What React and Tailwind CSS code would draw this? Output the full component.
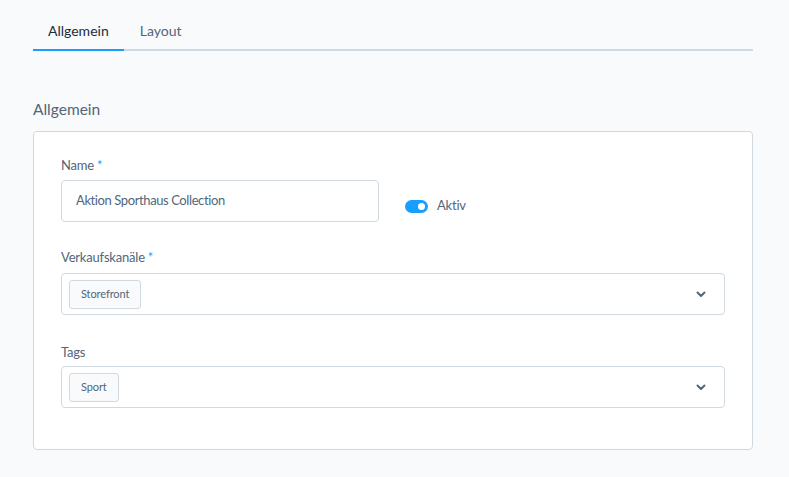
import React from 'react';

const ChevronDown = () => (
  <svg width="12" height="12" viewBox="0 0 12 12" fill="none">
    <path d="M2.5 4.5L6 8L9.5 4.5" stroke="#52667a" strokeWidth="2" strokeLinecap="round" strokeLinejoin="round" />
  </svg>
);

const Chip = ({ label }) => (
  <span className="inline-flex items-center h-[29px] px-[11px] border border-[#d1d9e0] rounded-[3px] bg-[#f9fafb] text-[11px] tracking-[-0.1px] text-[#52667a]">
    {label}
  </span>
);

const MultiSelect = ({ value }) => (
  <div className="flex items-center justify-between h-[42px] pl-[7px] pr-[17px] border border-[#d1d9e0] rounded-[4px] bg-white">
    <Chip label={value} />
    <ChevronDown />
  </div>
);

const Label = ({ children, required, className = 'mb-[6px]' }) => (
  <label className={`block text-[13px] tracking-[-0.2px] text-[#52667a] leading-[18px] ${className}`}>
    {children}
    {required && <span className="text-[#189eff] ml-[3px]">*</span>}
  </label>
);

export default function App() {
  return (
    <div
      className="min-h-[477px] bg-[#f9fafb] px-[33px] pt-[14px]"
      style={{ fontFamily: 'Lato, "Noto Sans", sans-serif' }}
    >
      <div className="flex w-[720px] border-b-2 border-[#d1d9e0]">
        <button className="px-[15px] pt-[6px] pb-[8px] text-[14px] text-[#1c2c3c] border-b-2 border-[#189eff] -mb-[2px]">
          Allgemein
        </button>
        <button className="px-[16px] pt-[6px] pb-[8px] text-[14px] text-[#52667a]">
          Layout
        </button>
      </div>

      <h2 className="mt-[48px] mb-[12px] text-[15.5px] text-[#52667a] leading-[20px]">Allgemein</h2>

      <div className="w-[720px] h-[319px] bg-white border border-[#d1d9e0] rounded-[4px] px-[27px] pt-[24px]">
        <div className="flex items-end gap-[26px]">
          <div className="w-[318px]">
            <Label required>Name</Label>
            <div className="h-[42px] flex items-center px-[14px] border border-[#d1d9e0] rounded-[4px] text-[13px] tracking-[-0.4px] text-[#52667a]">
              Aktion Sporthaus Collection
            </div>
          </div>
          <div className="flex items-center gap-[9px] h-[42px] pt-[10px]">
            <div className="w-[23px] h-[13px] rounded-full bg-[#189eff] flex items-center justify-end pr-[3px]">
              <div className="w-[7px] h-[7px] rounded-full bg-white" />
            </div>
            <span className="text-[13px] tracking-[-0.2px] text-[#52667a]">Aktiv</span>
          </div>
        </div>

        <div className="mt-[26px]">
          <Label required className="mb-[7px]">Verkaufskanäle</Label>
          <MultiSelect value="Storefront" />
        </div>

        <div className="mt-[28px]">
          <Label className="mb-[5px]">Tags</Label>
          <MultiSelect value="Sport" />
        </div>
      </div>
    </div>
  );
}
